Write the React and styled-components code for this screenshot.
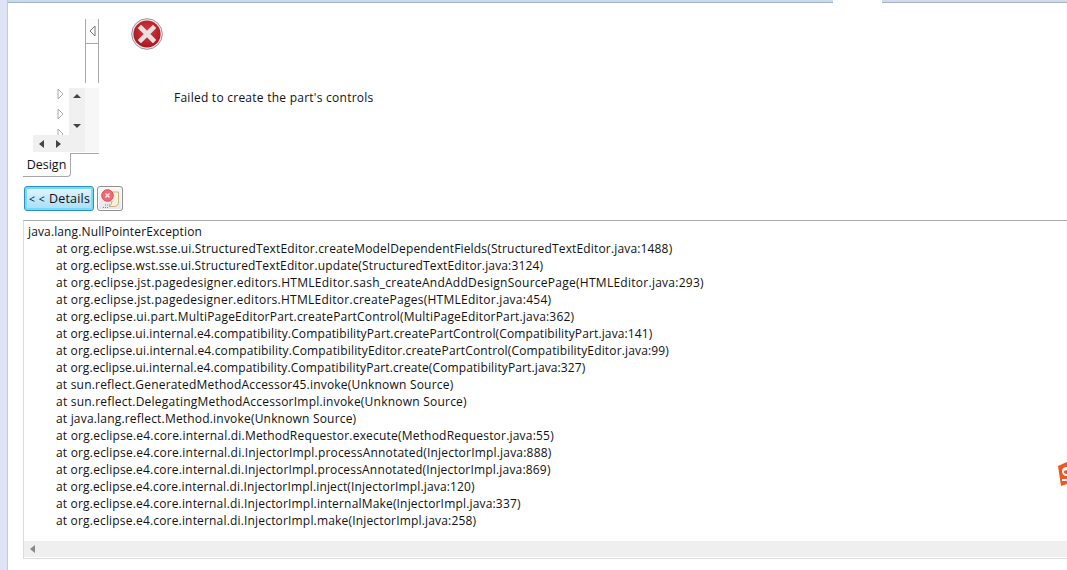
import React from "react";
import styled, { createGlobalStyle } from "styled-components";

const GlobalStyle = createGlobalStyle`
  html, body {
    margin: 0;
    padding: 0;
    background: #fff;
    overflow: hidden;
  }
  #root {
    width: 1067px;
    height: 570px;
    overflow: hidden;
  }
`;

const Page = styled.div`
  position: relative;
  display: flex;
  width: 1067px;
  height: 570px;
  font-family: "Open Sans", "Noto Sans", sans-serif;
  font-size: 12px;
  color: #111;
  background: #fff;
`;

const Rail = styled.div`
  flex: 0 0 7px;
  background: #dfe3f6;
  border-right: 1px solid #c6cade;
`;

const Main = styled.div`
  flex: 1;
  min-width: 0;
  display: flex;
  flex-direction: column;
`;

const TopStrip = styled.div`
  display: flex;
  height: 3px;
`;

const StripPiece = styled.div`
  height: 2px;
  background: ${(p) => p.$color};
  border-bottom: 1px solid #a9b1c0;
  flex: ${(p) => (p.$grow ? 1 : `0 0 ${p.$width}px`)};
  margin-left: ${(p) => p.$gap || 0}px;
`;

const Upper = styled.div`
  display: flex;
  height: 174px;
  box-sizing: border-box;
  padding: 16px 0 0 15px;
`;

const EditorStub = styled.div`
  flex: 0 0 76px;
  display: flex;
  flex-direction: column;
`;

const SashRow = styled.div`
  display: flex;
  justify-content: flex-end;
  height: 64px;
`;

const Sash = styled.div`
  width: 12px;
  border-left: 1px solid #a8a8a8;
  border-right: 1px solid #a8a8a8;
`;

const SashButton = styled.div`
  height: 24px;
  display: flex;
  align-items: center;
  justify-content: center;
  border-bottom: 1px solid #a8a8a8;
  background: #fbfbfb;
`;

const ListStub = styled.div`
  display: grid;
  grid-template-columns: 10px 36px 16px 14px;
  grid-template-rows: 47px 17px;
  margin-top: 5px;
  height: 64px;
`;

const TreeRows = styled.div`
  grid-column: 2;
  grid-row: 1;
  background: #fff;
  display: flex;
  flex-direction: column;
  align-items: flex-end;
  gap: 8px;
  padding: 0 5px 0 0;
  overflow: hidden;
`;

const VScroll = styled.div`
  grid-column: 3;
  grid-row: 1;
  background: #f0f0f0;
  display: flex;
  flex-direction: column;
  align-items: center;
  justify-content: space-between;
  padding: 5px 0 6px;
`;

const HScroll = styled.div`
  grid-column: 2 / 4;
  grid-row: 2;
  background: #f0f0f0;
  display: flex;
  align-items: center;
  gap: 10px;
  padding-left: 5px;
`;

const Filler = styled.div`
  grid-column: 4;
  grid-row: 1 / 3;
  background: #f7f7f7;
`;

const TabRow = styled.div`
  display: flex;
  height: 24px;
  margin-top: 1px;
  border-top: 1px solid #a8a8a8;
  box-sizing: border-box;
`;

const Tab = styled.div`
  width: 48px;
  margin-top: -1px;
  background: #fff;
  border-right: 1px solid #a8a8a8;
  border-bottom: 1px solid #a8a8a8;
  border-bottom-right-radius: 4px;
  box-sizing: border-box;
  font-size: 12.5px;
  line-height: 24px;
  text-align: center;
`;

const MessageArea = styled.div`
  flex: 1;
  display: grid;
  grid-template-columns: 32px 1fr;
  grid-template-rows: 32px 1fr;
  column-gap: 10px;
  padding-left: 32px;
  margin-top: -1px;
`;

const MessageText = styled.div`
  grid-column: 2;
  grid-row: 2;
  padding: 39px 0 0 1px;
  font-size: 12px;
  line-height: 17px;
  letter-spacing: 0.25px;
`;

const ButtonRow = styled.div`
  display: flex;
  gap: 3px;
  height: 25px;
  margin: 9px 0 0 16px;
`;

const DetailsButton = styled.button`
  width: 70px;
  height: 25px;
  padding: 0 0 0 1px;
  border: 1px solid #2c8fc4;
  border-radius: 3px;
  background: linear-gradient(#e8f7fe, #c2e9fb 50%, #a8def8);
  box-shadow: inset 0 0 0 2px #74dcf9;
  font: inherit;
  font-size: 12.5px;
  color: #111;
  letter-spacing: 0.2px;
`;

const Chevrons = styled.span`
  font-size: 10.5px;
  letter-spacing: 0.6px;
`;

const IconButton = styled.button`
  width: 26px;
  height: 25px;
  padding: 0;
  border: 1px solid #8e8e8e;
  border-radius: 3px;
  background: linear-gradient(#f7f7f7, #e6e6e6);
  box-shadow: inset 0 0 0 1px #fcfcfc;
  display: flex;
  align-items: center;
  justify-content: center;
`;

const TraceBox = styled.div`
  margin: 9px 0 0 15px;
  height: 339px;
  display: flex;
  flex-direction: column;
  border-top: 1px solid #ababab;
  border-left: 1px solid #dcdcdc;
  border-bottom: 1px solid #dcdcdc;
  box-sizing: border-box;
`;

const TraceBody = styled.div`
  flex: 1;
  min-height: 0;
  padding: 2px 0 0 4px;
  overflow: hidden;
`;

const TraceLine = styled.div`
  height: 17px;
  line-height: 17px;
  font-size: 12px;
  white-space: pre;
  letter-spacing: ${(p) => p.$tracking}px;
  padding-left: ${(p) => (p.$indent ? 28 : 0)}px;
`;

const BottomScroll = styled.div`
  flex: 0 0 16px;
  margin-bottom: 1px;
  background: #efefef;
  display: flex;
  align-items: center;
  padding-left: 5px;
`;

const Logo = styled.svg`
  position: absolute;
  left: 1058px;
  top: 462px;
`;

const TRACE = [
  ["at org.eclipse.wst.sse.ui.StructuredTextEditor.createModelDependentFields(StructuredTextEditor.java:1488)", 0.16],
  ["at org.eclipse.wst.sse.ui.StructuredTextEditor.update(StructuredTextEditor.java:3124)", 0.15],
  ["at org.eclipse.jst.pagedesigner.editors.HTMLEditor.sash_createAndAddDesignSourcePage(HTMLEditor.java:293)", 0.264],
  ["at org.eclipse.jst.pagedesigner.editors.HTMLEditor.createPages(HTMLEditor.java:454)", 0.257],
  ["at org.eclipse.ui.part.MultiPageEditorPart.createPartControl(MultiPageEditorPart.java:362)", 0.195],
  ["at org.eclipse.ui.internal.e4.compatibility.CompatibilityPart.createPartControl(CompatibilityPart.java:141)", 0.13],
  ["at org.eclipse.ui.internal.e4.compatibility.CompatibilityEditor.createPartControl(CompatibilityEditor.java:99)", 0.15],
  ["at org.eclipse.ui.internal.e4.compatibility.CompatibilityPart.create(CompatibilityPart.java:327)", 0.12],
  ["at sun.reflect.GeneratedMethodAccessor45.invoke(Unknown Source)", 0.2],
  ["at sun.reflect.DelegatingMethodAccessorImpl.invoke(Unknown Source)", 0.225],
  ["at java.lang.reflect.Method.invoke(Unknown Source)", 0.19],
  ["at org.eclipse.e4.core.internal.di.MethodRequestor.execute(MethodRequestor.java:55)", 0.2],
  ["at org.eclipse.e4.core.internal.di.InjectorImpl.processAnnotated(InjectorImpl.java:888)", 0.195],
  ["at org.eclipse.e4.core.internal.di.InjectorImpl.processAnnotated(InjectorImpl.java:869)", 0.185],
  ["at org.eclipse.e4.core.internal.di.InjectorImpl.inject(InjectorImpl.java:120)", 0.16],
  ["at org.eclipse.e4.core.internal.di.InjectorImpl.internalMake(InjectorImpl.java:337)", 0.175],
  ["at org.eclipse.e4.core.internal.di.InjectorImpl.make(InjectorImpl.java:258)", 0.175],
];

const Arrow = ({ dir, size = 5, color = "#444" }) => {
  const points = {
    up: "0,5 8,5 4,1",
    down: "0,1 8,1 4,5",
    left: "6,0 6,8 1,4",
    right: "1,0 1,8 6,4",
  };
  const horizontal = dir === "left" || dir === "right";
  return (
    <svg width={horizontal ? size + 2 : size + 3} height={horizontal ? size + 3 : size + 1} viewBox={horizontal ? "0 0 7 8" : "0 0 8 6"}>
      <polygon points={points[dir]} fill={color} />
    </svg>
  );
};

const TreeTwisty = () => (
  <svg width="7" height="12" viewBox="0 0 7 12" style={{ flex: "none" }}>
    <polygon points="1,1 6,6 1,11" fill="#fff" stroke="#a8acb8" />
  </svg>
);

const ErrorIcon = () => (
  <svg width="32" height="32" viewBox="0 0 32 32">
    <defs>
      <radialGradient id="errFill" cx="50%" cy="40%" r="60%">
        <stop offset="0%" stopColor="#d93a44" />
        <stop offset="100%" stopColor="#a8161f" />
      </radialGradient>
    </defs>
    <circle cx="16" cy="16" r="15.3" fill="#f2eeee" stroke="#9d8f90" strokeWidth="1" />
    <circle cx="16" cy="16" r="13.6" fill="url(#errFill)" />
    <path d="M10 10 L22 22 M22 10 L10 22" stroke="#e6e0e0" strokeWidth="4.6" strokeLinecap="square" />
  </svg>
);

const ErrorLogIcon = () => (
  <svg width="21" height="21" viewBox="0 0 21 21">
    <path d="M8 4 H18.5 V14 Q18.5 18 14 18.5 H9 Q12 17 12 13 H8 Z" fill="#faf2d8" stroke="#c4b48a" />
    <path d="M5 17 H11 M3 19.5 H8" stroke="#888" strokeDasharray="1 1" />
    <circle cx="7.5" cy="7.5" r="5.8" fill="#ee6a74" stroke="#dc4a56" />
    <path d="M5.5 5.5 L9.5 9.5 M9.5 5.5 L5.5 9.5" stroke="#fbe6e6" strokeWidth="1.4" />
  </svg>
);

export default function App() {
  return (
    <>
      <GlobalStyle />
      <Page>
        <Rail />
        <Main>
          <TopStrip>
            <StripPiece $color="#c6dcf0" $width={825} />
            <StripPiece $color="#d0dcec" $grow $gap={49} />
          </TopStrip>
          <Upper>
            <EditorStub>
              <SashRow>
                <Sash>
                  <SashButton>
                    <svg width="7" height="12" viewBox="0 0 7 12">
                      <polygon points="6,1 1,6 6,11" fill="#fff" stroke="#777" />
                    </svg>
                  </SashButton>
                </Sash>
              </SashRow>
              <ListStub>
                <TreeRows>
                  <TreeTwisty />
                  <TreeTwisty />
                  <TreeTwisty />
                </TreeRows>
                <VScroll>
                  <Arrow dir="up" />
                  <Arrow dir="down" />
                </VScroll>
                <HScroll>
                  <Arrow dir="left" />
                  <Arrow dir="right" />
                </HScroll>
                <Filler />
              </ListStub>
              <TabRow>
                <Tab>Design</Tab>
              </TabRow>
            </EditorStub>
            <MessageArea>
              <ErrorIcon />
              <MessageText>Failed to create the part's controls</MessageText>
            </MessageArea>
          </Upper>
          <ButtonRow>
            <DetailsButton>
              <Chevrons>&lt; &lt;</Chevrons> Details
            </DetailsButton>
            <IconButton>
              <ErrorLogIcon />
            </IconButton>
          </ButtonRow>
          <TraceBox>
            <TraceBody>
              <TraceLine $tracking={0.13}>java.lang.NullPointerException</TraceLine>
              {TRACE.map(([line, tracking]) => (
                <TraceLine $indent $tracking={tracking} key={line}>
                  {line}
                </TraceLine>
              ))}
            </TraceBody>
            <BottomScroll>
              <Arrow dir="left" color="#888" />
            </BottomScroll>
          </TraceBox>
        </Main>
        <Logo width="9" height="25" viewBox="0 0 9 25">
          <path d="M0 4 L9 0 V22 L3 24 Z" fill="#f0561d" />
          <path d="M4 9 Q4 5 9 5 V8 Q6 8 6 10 Q6 12 9 12 V14 Q4 14 4 9 Z M4 17 H9 V19 H4 Z" fill="#fff" />
        </Logo>
      </Page>
    </>
  );
}
